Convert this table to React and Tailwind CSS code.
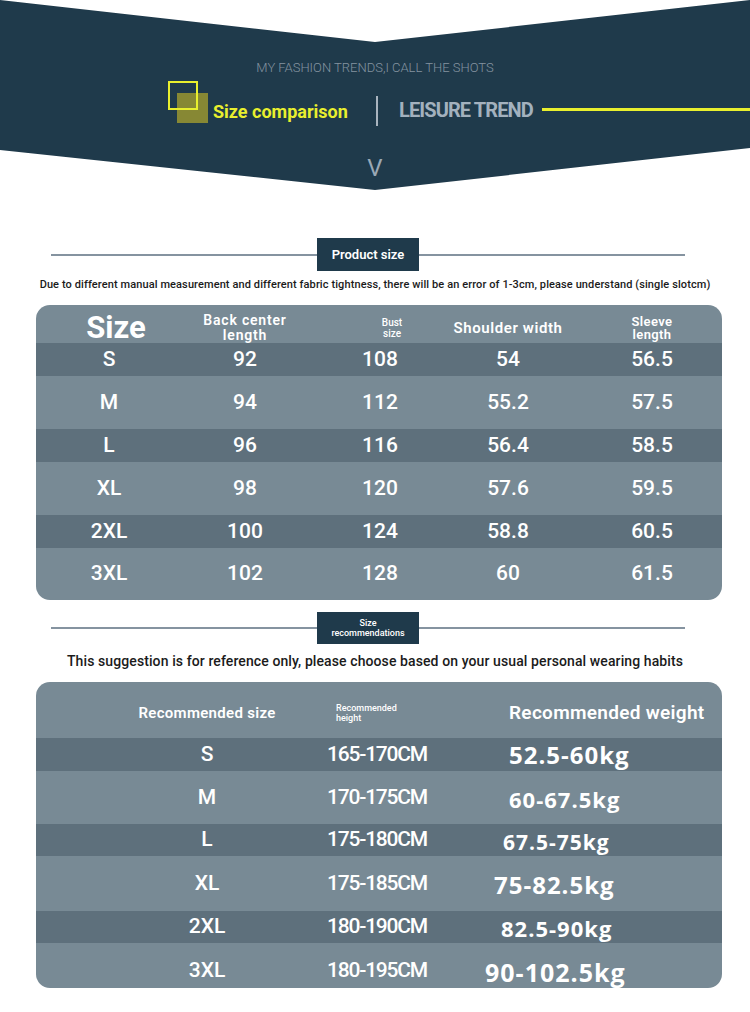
const sizes = [
  { s: "S", back: "92", bust: "108", shoulder: "54", sleeve: "56.5", row: "h-[33px] bg-[#5e707c]" },
  { s: "M", back: "94", bust: "112", shoulder: "55.2", sleeve: "57.5", row: "h-[53px]" },
  { s: "L", back: "96", bust: "116", shoulder: "56.4", sleeve: "58.5", row: "h-[33px] bg-[#5e707c]" },
  { s: "XL", back: "98", bust: "120", shoulder: "57.6", sleeve: "59.5", row: "h-[53px]" },
  { s: "2XL", back: "100", bust: "124", shoulder: "58.8", sleeve: "60.5", row: "h-[33px] bg-[#5e707c]" },
  { s: "3XL", back: "102", bust: "128", shoulder: "60", sleeve: "61.5", row: "h-[52px]" },
];

const recs = [
  { s: "S", h: "165-170CM", w: "52.5-60kg", row: "h-[33px] bg-[#5e707c]", wt: "pl-[47px] text-[24px]" },
  { s: "M", h: "170-175CM", w: "60-67.5kg", row: "h-[53px]", wt: "pl-[47px] text-[22px] pt-[2px]" },
  { s: "L", h: "175-180CM", w: "67.5-75kg", row: "h-[32px] bg-[#5e707c]", wt: "pl-[41px] text-[21px] pt-[4px]" },
  { s: "XL", h: "175-185CM", w: "75-82.5kg", row: "h-[55px]", wt: "pl-[32px] text-[24px] pt-[2px]" },
  { s: "2XL", h: "180-190CM", w: "82.5-90kg", row: "h-[32px] bg-[#5e707c]", wt: "pl-[39px] text-[22px] pt-[2px]" },
  { s: "3XL", h: "180-195CM", w: "90-102.5kg", row: "h-[45px] pt-[10px]", wt: "pl-[23px] text-[25px] pt-[2px]" },
];

function SectionTitle({ children, box }) {
  return (
    <div className="ml-[51px] mr-[65px] flex items-center">
      <div className="h-[2px] flex-1 bg-[#8593a0]" />
      <div className={`flex w-[102px] flex-col items-center justify-center bg-[#1f3a4b] text-center text-white ${box}`}>
        {children}
      </div>
      <div className="h-[2px] flex-1 bg-[#8593a0]" />
    </div>
  );
}

export default function App() {
  return (
    <div className="min-h-[1012px] w-[750px] bg-white font-['Roboto',sans-serif]">
      <header className="flex h-[190px] flex-col items-center bg-[#1f3a4b] pt-[60px] [clip-path:polygon(0_0,50%_42px,100%_0,100%_148px,50%_190px,0_150px)]">
        <p className="text-[13px] font-light uppercase leading-[16px] text-[#8493a0]">
          MY FASHION TRENDS,I CALL THE SHOTS
        </p>
        <div className="mt-[5px] flex w-full items-start pl-[168px]">
          <div className="relative h-[42px] w-[40px] shrink-0">
            <div className="absolute left-[9px] top-[12px] h-[30px] w-[31px] bg-[#878834]" />
            <div className="absolute left-0 top-0 h-[29px] w-[30px] border-2 border-[#e9ef2e]" />
          </div>
          <span className="ml-[5px] mt-[21px] w-[135px] whitespace-nowrap text-[18px] font-bold leading-[20px] text-[#e9ef2e]">
            Size comparison
          </span>
          <div className="ml-[28px] mt-[15px] h-[30px] w-[2px] bg-[#a9b4bf]" />
          <span className="ml-[21px] mt-[17px] w-[135px] whitespace-nowrap text-[20px] font-bold leading-[24px] tracking-[-0.9px] text-[#a3b1be]">
            LEISURE TREND
          </span>
          <div className="ml-[8px] mt-[27px] h-[3px] flex-1 bg-[#e9ef2e]" />
        </div>
        <span className="mt-[28px] text-[24px] leading-[28px] text-[#9aa8b5]">V</span>
      </header>

      <section className="mt-[48px]">
        <SectionTitle box="h-[33px]">
          <span className="text-[13px] font-semibold">Product size</span>
        </SectionTitle>
        <p className="mt-[7px] whitespace-nowrap text-center text-[11px] font-medium leading-[14px] tracking-[0.1px] text-[#1b1b1b]">
          Due to different manual measurement and different fabric tightness, there will be an error of 1-3cm, please understand (single slotcm)
        </p>

        <div className="ml-[36px] mr-[28px] mt-[13px] overflow-hidden rounded-[14px] bg-[#788a95] text-white">
          <div className="grid h-[38px] grid-cols-[146px_126px_144px_112px_1fr] items-center pt-[8px] text-center">
            <span className="pl-[14px] text-[31px] font-bold leading-[30px]">Size</span>
            <span className="text-[14px] font-semibold leading-[15px] tracking-[0.8px]">
              Back center
              <br />
              length
            </span>
            <span className="pl-[24px] text-[10px] font-medium leading-[11px]">
              Bust
              <br />
              size
            </span>
            <span className="whitespace-nowrap text-[15px] font-semibold tracking-[0.6px]">Shoulder width</span>
            <span className="pl-[18px] text-[13px] font-semibold leading-[13px] tracking-[0.4px]">
              Sleeve
              <br />
              length
            </span>
          </div>
          {sizes.map((r) => (
            <div
              key={r.s}
              className={`grid grid-cols-[146px_126px_144px_112px_1fr] items-center text-center text-[21px] font-medium ${r.row}`}
            >
              <span>{r.s}</span>
              <span>{r.back}</span>
              <span>{r.bust}</span>
              <span>{r.shoulder}</span>
              <span className="pl-[18px]">{r.sleeve}</span>
            </div>
          ))}
        </div>
      </section>

      <section className="mt-[12px]">
        <SectionTitle box="h-[32px]">
          <span className="text-[9px] font-medium leading-[10px]">
            Size
            <br />
            recommendations
          </span>
        </SectionTitle>
        <p className="mt-[9px] text-center text-[14px] font-medium leading-[16px] tracking-[0.1px] text-[#1b1b1b]">
          This suggestion is for reference only, please choose based on your usual personal wearing habits
        </p>

        <div className="ml-[36px] mr-[28px] mt-[13px] overflow-hidden rounded-[14px] bg-[#788a95] text-white">
          <div className="grid h-[56px] grid-cols-[170px_170px_1fr] items-center pl-[86px] pt-[6px]">
            <span className="whitespace-nowrap text-center text-[15px] font-semibold tracking-[0.3px]">Recommended size</span>
            <span className="pl-[44px] text-[9px] font-medium leading-[10px]">
              Recommended
              <br />
              height
            </span>
            <span className="whitespace-nowrap pl-[47px] text-[19px] font-semibold tracking-[0.3px]">Recommended weight</span>
          </div>
          {recs.map((r) => (
            <div key={r.s} className={`grid grid-cols-[170px_170px_1fr] items-center pl-[86px] ${r.row}`}>
              <span className="text-center text-[21px] font-medium">{r.s}</span>
              <span className="text-center text-[21px] font-medium tracking-[-1.2px]">{r.h}</span>
              <span className={`font-['Open_Sans',sans-serif] font-bold leading-[28px] tracking-[1px] ${r.wt}`}>{r.w}</span>
            </div>
          ))}
        </div>
      </section>
    </div>
  );
}
